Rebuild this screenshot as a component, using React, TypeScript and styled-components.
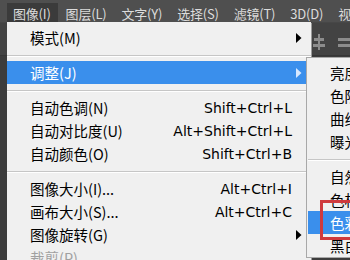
import styled, { createGlobalStyle } from "styled-components";

const GlobalStyle = createGlobalStyle`
  html, body {
    margin: 0;
    padding: 0;
    background: #3c3c3c;
  }
`;

const FONT = `"Noto Sans CJK SC", "Noto Sans", "DejaVu Sans", sans-serif`;

const Screen = styled.div`
  position: relative;
  width: 350px;
  height: 260px;
  overflow: hidden;
  background: #3c3c3c;
  font-family: ${FONT};
`;

const MenuBar = styled.div`
  display: flex;
  align-items: stretch;
  height: 22px;
  padding-left: 7px;
  gap: 2px;
  background: #4f4f4f;
`;

const BarItem = styled.div<{ $active?: boolean }>`
  display: flex;
  align-items: center;
  padding: 1px 7px 0 6px;
  margin-top: 3px;
  font-size: 13px;
  letter-spacing: -0.2px;
  color: #dcdcdc;
  background: ${(p) => (p.$active ? "#3b3b3b" : "transparent")};
  white-space: nowrap;
`;

const OptionsBar = styled.div`
  display: flex;
  justify-content: flex-end;
  align-items: center;
  gap: 12px;
  height: 34px;
  padding-top: 6px;
  border-top: 1px solid #474747;
  background: #434343;
  border-bottom: 1px solid #363636;
  box-sizing: border-box;
`;

const AlignIcon = styled.svg`
  display: block;
  flex-shrink: 0;
`;

const DropMenu = styled.div`
  position: absolute;
  left: 7px;
  top: 22px;
  width: 304px;
  padding-top: 4px;
  background: #f0f0f0;
  box-shadow: 1px 1px 0 #9a9a9a;
`;

const MenuRow = styled.div<{ $active?: boolean; $disabled?: boolean }>`
  display: flex;
  align-items: center;
  height: 23px;
  padding-left: 23px;
  font-size: 14.5px;
  color: ${(p) => (p.$active ? "#ffffff" : p.$disabled ? "#a0a0a0" : "#000000")};
  background: ${(p) => (p.$active ? "#3a8fec" : "transparent")};
  white-space: nowrap;
`;

const Label = styled.span`
  flex: 1;
`;

const Shortcut = styled.span`
  font-family: "DejaVu Sans", sans-serif;
  font-size: 14px;
`;

const ArrowSlot = styled.span`
  display: flex;
  align-items: center;
  width: 19px;
  padding-left: 4px;
  box-sizing: border-box;
`;

const Separator = styled.div`
  height: 12px;
  display: flex;
  align-items: center;

  &::after {
    content: "";
    flex: 1;
    height: 1px;
    background: #c6c6c6;
    box-shadow: 0 1px 0 #ffffff;
  }
`;

const SubMenu = styled.div`
  position: absolute;
  left: 306px;
  top: 57px;
  width: 80px;
  padding: 3px 0 0 1px;
  background: #f0f0f0;
  border: 1px solid #a8a8a8;
  border-right: none;
`;

const SubRow = styled.div<{ $active?: boolean }>`
  display: flex;
  align-items: center;
  height: 23px;
  padding-left: 22px;
  font-size: 14.5px;
  color: ${(p) => (p.$active ? "#ffffff" : "#000000")};
  background: ${(p) => (p.$active ? "#3a8fec" : "transparent")};
  white-space: nowrap;
`;

const Callout = styled.div`
  position: absolute;
  left: 320px;
  top: 200px;
  width: 50px;
  height: 40px;
  box-sizing: border-box;
  border: 3px solid #cf3a3d;
`;

const Arrow = ({ light }: { light?: boolean }) => (
  <svg width="6" height="10" viewBox="0 0 6 10">
    <path d="M0 0 L5.5 5 L0 10 Z" fill={light ? "#d6e8ff" : "#000"} />
  </svg>
);

type Item =
  | { sep: true }
  | {
      label: string;
      shortcut?: string;
      sub?: boolean;
      active?: boolean;
      disabled?: boolean;
    };

const items: Item[] = [
  { label: "模式(M)", sub: true },
  { sep: true },
  { label: "调整(J)", sub: true, active: true },
  { sep: true },
  { label: "自动色调(N)", shortcut: "Shift+Ctrl+L" },
  { label: "自动对比度(U)", shortcut: "Alt+Shift+Ctrl+L" },
  { label: "自动颜色(O)", shortcut: "Shift+Ctrl+B" },
  { sep: true },
  { label: "图像大小(I)...", shortcut: "Alt+Ctrl+I" },
  { label: "画布大小(S)...", shortcut: "Alt+Ctrl+C" },
  { label: "图像旋转(G)", sub: true },
  { label: "裁剪(P)", disabled: true },
];

const subItems: (string | null)[] = [
  "亮度/对比度(C)...",
  "色阶(L)...",
  "曲线(U)...",
  "曝光度(E)...",
  null,
  "自然饱和度(V)...",
  "色相/饱和度(H)...",
  "色彩平衡(B)...",
  "黑白(K)...",
];

const barItems = ["图像(I)", "图层(L)", "文字(Y)", "选择(S)", "滤镜(T)", "3D(D)", "视图(V)"];

export default function App() {
  return (
    <Screen>
      <GlobalStyle />
      <MenuBar>
        {barItems.map((t, i) => (
          <BarItem key={t} $active={i === 0}>
            {t}
          </BarItem>
        ))}
      </MenuBar>
      <OptionsBar>
        <AlignIcon width="13" height="16" viewBox="0 0 13 16">
          <rect x="5" y="0" width="2" height="16" fill="#8c8c8c" />
          <rect x="1" y="4" width="10" height="3" fill="#8c8c8c" />
          <rect x="0" y="10" width="12" height="3" fill="#8c8c8c" />
        </AlignIcon>
        <AlignIcon width="12" height="16" viewBox="0 0 12 16">
          <rect x="0" y="4" width="12" height="3" fill="#8c8c8c" />
          <rect x="0" y="10" width="12" height="3" fill="#8c8c8c" />
        </AlignIcon>
      </OptionsBar>

      <DropMenu>
        {items.map((it, i) =>
          "sep" in it ? (
            <Separator key={i} />
          ) : (
            <MenuRow key={i} $active={it.active} $disabled={it.disabled}>
              <Label>{it.label}</Label>
              {it.shortcut && <Shortcut>{it.shortcut}</Shortcut>}
              <ArrowSlot>{it.sub && <Arrow light={it.active} />}</ArrowSlot>
            </MenuRow>
          )
        )}
      </DropMenu>

      <SubMenu>
        {subItems.map((t, i) =>
          t === null ? (
            <Separator key={i} />
          ) : (
            <SubRow key={i} $active={t.startsWith("色彩")}>
              {t}
            </SubRow>
          )
        )}
      </SubMenu>
      <Callout />
    </Screen>
  );
}
